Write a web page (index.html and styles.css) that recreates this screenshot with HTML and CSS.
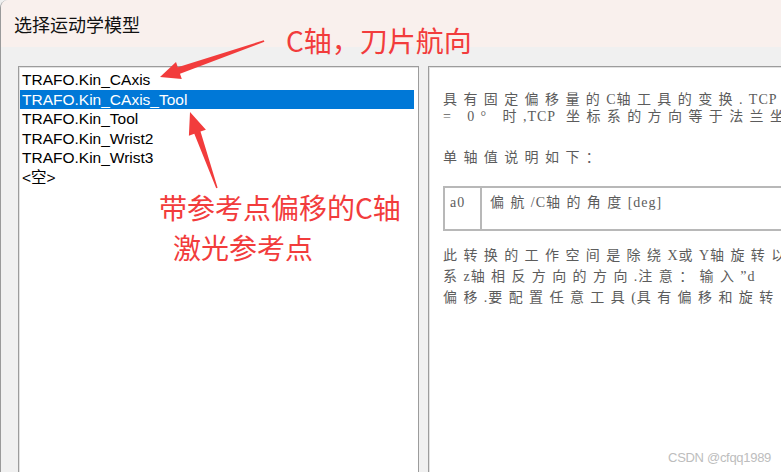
FILE: index.html
```html
<!DOCTYPE html>
<html lang="zh">
<head>
<meta charset="utf-8">
<title>选择运动学模型</title>
<link rel="stylesheet" href="styles.css">
</head>
<body>
<div class="window">
  <div class="titlebar">选择运动学模型</div>
  <div class="content">
    <ul class="list">
      <li class="item">TRAFO.Kin_CAxis</li>
      <li class="item selected">TRAFO.Kin_CAxis_Tool</li>
      <li class="item">TRAFO.Kin_Tool</li>
      <li class="item">TRAFO.Kin_Wrist2</li>
      <li class="item">TRAFO.Kin_Wrist3</li>
      <li class="item">&lt;空&gt;</li>
    </ul>
    <div class="detail">
      <p class="para">具有固定偏移量的<span class="lat">C</span>轴工具的变换.<span class="lat">TCP</span> 坐标系的方向<br>= 0° 时<span class="lat">,TCP</span> 坐标系的方向等于法兰坐标系</p>
      <p class="para">单轴值说明如下：</p>
      <table class="axes">
        <tr><td class="key"><span class="lat">a0</span></td><td class="val">偏航<span class="lat">/C</span>轴的角度<span class="lat">[deg]</span></td></tr>
      </table>
      <p class="para loose">此转换的工作空间是除绕<span class="lat">X</span>或<span class="lat">Y</span>轴旋转以外的<br>系<span class="lat">z</span>轴相反方向的方向<span class="lat">.</span>注意：输入<span class="lat">”d</span><br>偏移<span class="lat">.</span>要配置任意工具<span class="lat">(</span>具有偏移和旋转</p>
    </div>
  </div>
</div>

<div class="note note-top">C轴，刀片航向</div>
<div class="note note-bottom">带参考点偏移的C轴<br><span class="indent">激光参考点</span></div>

<svg class="arrows" width="781" height="472" viewBox="0 0 781 472">
  <polygon fill="#f23c3c" points="160,77 176,62 177.8,67.2 263.8,40.3 264.4,41.8 180,73.8 181.8,79"/>
  <polygon fill="#f23c3c" points="190,112 205.9,129.7 200.5,131.6 217.6,187.8 216.2,188.3 194.3,133.8 188.9,135.7"/>
</svg>

<div class="watermark">CSDN @cfqq1989</div>
</body>
</html>
```

FILE: styles.css
```css
html, body {
  margin: 0;
  padding: 0;
}
body {
  width: 781px;
  height: 472px;
  overflow: hidden;
  position: relative;
  background: #f0f0f0;
  font-family: "Noto Sans CJK SC", sans-serif;
}
.window {
  height: 472px;
  border-left: 1px solid #9a9a9a;
  border-top-left-radius: 8px;
  overflow: hidden;
  background: #f0f0f0;
}
.titlebar {
  height: 47px;
  background: #f9f0ed;
  display: flex;
  align-items: center;
  padding-left: 13px;
  font-size: 18px;
  color: #111;
}
.content {
  display: flex;
  gap: 9px;
  padding: 19px 0 0 17px;
}
.list {
  flex: none;
  width: 394px;
  height: 420px;
  margin: 0;
  padding: 3px 4px 0 1px;
  list-style: none;
  background: #fff;
  border: 1px solid #9c9c9c;
  box-shadow: inset 1px 1px 0 #e2e2e2;
  font-family: "Liberation Sans", "Noto Sans CJK SC", sans-serif;
  font-size: 15.5px;
  color: #000;
}
.item {
  height: 19.6px;
  line-height: 19.6px;
  padding-left: 2px;
  white-space: nowrap;
}
.item.selected {
  background: #0078d7;
  color: #fff;
}
.detail {
  flex: none;
  width: 500px;
  height: 420px;
  background: #fff;
  border: 1px solid #9c9c9c;
  box-shadow: inset 1px 1px 0 #e2e2e2;
  padding: 24px 0 0 14px;
  box-sizing: border-box;
  font-family: "Liberation Serif", "Noto Sans CJK SC", serif;
  font-size: 14px;
  letter-spacing: 6.4px;
  color: #5c5c5c;
  white-space: nowrap;
  overflow: hidden;
}
.lat {
  letter-spacing: 1px;
}
.para {
  margin: 0 0 24px 0;
  line-height: 17px;
}
.para.loose {
  line-height: 21px;
  margin-top: 14px;
}
.axes {
  border-collapse: collapse;
  width: 480px;
  margin-top: -4px;
}
.axes td {
  border: 2px solid #b8b8b8;
  height: 35px;
  vertical-align: top;
  padding: 6px 0 0 5px;
  line-height: 17px;
}
.axes .key {
  width: 30px;
}
.axes .val {
  padding-left: 8px;
}
.note {
  position: absolute;
  color: #f23c3c;
  font-family: "Noto Sans CJK SC", sans-serif;
  font-size: 28px;
  line-height: 40px;
  white-space: nowrap;
}
.note-top {
  left: 286px;
  top: 20px;
}
.note-bottom {
  left: 159px;
  top: 187px;
}
.indent {
  padding-left: 14px;
}
.arrows {
  position: absolute;
  left: 0;
  top: 0;
  pointer-events: none;
}
.watermark {
  position: absolute;
  right: 10px;
  bottom: 7px;
  font-family: "Liberation Sans", sans-serif;
  font-size: 13px;
  color: #bdbdbd;
  letter-spacing: -0.3px;
}
```
